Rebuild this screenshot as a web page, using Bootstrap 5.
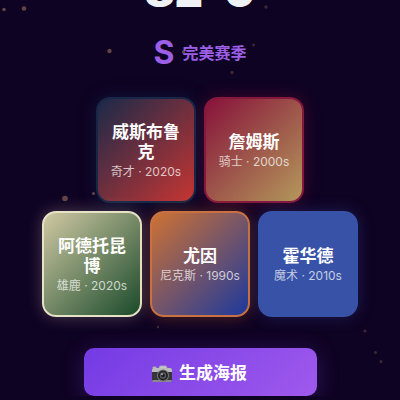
<!DOCTYPE html>
<html lang="zh-CN">
<head>
<meta charset="utf-8">
<meta name="viewport" content="width=device-width, initial-scale=1">
<title>82-0 完美赛季</title>
<link href="https://cdn.jsdelivr.net/npm/bootstrap@5.3.0/dist/css/bootstrap.min.css" rel="stylesheet">
<style>
body{background:#0f0323;color:#fff;font-family:Inter,"Noto Sans CJK SC",sans-serif;overflow:hidden}
.score{font-size:44px;line-height:48px;font-weight:900;color:#eef2f4;margin-top:-33px}
.verdict{color:#9c5fe6;margin-top:15px;height:46px}
.grade{font-size:32px;line-height:46px;font-weight:700}
.verdict-name{font-size:16px;line-height:24px;font-weight:700}
.roster{margin-top:21px}
.player{width:100px;height:106px;padding-top:2px;border:2px solid var(--edge);border-radius:14px;background:linear-gradient(135deg,var(--from),var(--to)) border-box;box-shadow:0 0 16px var(--glow)}
.player-name{font-size:17px;line-height:20px;font-weight:700}
.player-team{font-size:12px;line-height:18px;margin-top:1px;color:rgba(255,255,255,.72);white-space:nowrap}
.wizards{--from:#17294a;--to:#c93632;--edge:#182748;--glow:#0d244b88}
.cavs{--from:#860f39;--to:#b59b5c;--edge:#86183d;--glow:#860f3966}
.bucks{--from:#d3cba5;--to:#174829;--edge:#e6e2c7;--glow:#eee1c544}
.knicks{--from:#d27331;--to:#1a389f;--edge:#c87244;--glow:#e0702a55}
.magic{--from:#3852a7;--to:#3852a7;--edge:#3852a7;--glow:#3852a755}
.poster-btn,.poster-btn:hover{width:58.25%;height:48px;margin-top:31px;padding:10px 14px 6px 12px;gap:6px;border-radius:10px;border:0;color:#fff;font-size:17px;font-weight:700;background:linear-gradient(135deg,#743be4,#9f59ed);box-shadow:0 4px 22px #6d35d455}
.stars{z-index:2;pointer-events:none}
</style>
</head>
<body>
<svg class="stars position-absolute top-0 start-0 w-100 h-100" viewBox="0 0 400 400" aria-hidden="true" fill="#a87962">
<g opacity=".55"><circle cx="4" cy="9.500" r="1.800"/><circle cx="24" cy="8.500" r="2.300"/><circle cx="109.500" cy="51" r="2.200"/><circle cx="183.500" cy="52" r="1.800"/><circle cx="65" cy="198.500" r="2.800"/><circle cx="93.500" cy="193.500" r="1.500"/></g>
<g opacity=".3"><circle cx="266" cy="7" r="1.700"/><circle cx="253.500" cy="45" r="1.400"/><circle cx="232" cy="72.500" r="1.700"/><circle cx="158" cy="327" r="1.200"/><circle cx="365" cy="331" r="1.600"/><circle cx="375.500" cy="352.500" r="1.500"/><circle cx="381" cy="361.500" r="1.500"/></g>
</svg>
<main class="d-flex flex-column align-items-center text-center">
<h1 class="score mb-0">82-0</h1>
<div class="verdict d-flex align-items-center justify-content-center gap-2"><span class="grade">S</span><span class="verdict-name">完美赛季</span></div>
<section class="roster d-flex flex-column gap-2">
<div class="d-flex justify-content-center gap-2">
<article class="player wizards d-flex flex-column justify-content-center px-2"><div class="player-name">威斯布鲁克</div><div class="player-team">奇才 · 2020s</div></article>
<article class="player cavs d-flex flex-column justify-content-center px-2"><div class="player-name">詹姆斯</div><div class="player-team">骑士 · 2000s</div></article>
</div>
<div class="d-flex justify-content-center gap-2">
<article class="player bucks d-flex flex-column justify-content-center px-2"><div class="player-name">阿德托昆博</div><div class="player-team">雄鹿 · 2020s</div></article>
<article class="player knicks d-flex flex-column justify-content-center px-2"><div class="player-name">尤因</div><div class="player-team">尼克斯 · 1990s</div></article>
<article class="player magic d-flex flex-column justify-content-center px-2"><div class="player-name">霍华德</div><div class="player-team">魔术 · 2010s</div></article>
</div>
</section>
<button type="button" class="poster-btn btn d-flex align-items-center justify-content-center">
<svg width="22" height="18" viewBox="0 0 22 18" aria-hidden="true"><path d="M2 3V2h3v1M8 3l1-2h6l1 2" fill="#c8c8cb" stroke="#aaaab0"/><rect x="1" y="3" width="20" height="14" rx="1.500" fill="#37373a"/><path d="M1 4.500Q1 3 2.500 3h17Q21 3 21 4.500V7H1z" fill="#bcbcc0"/><rect x="1" y="15" width="20" height="2" rx="1" fill="#88888d"/><circle cx="12" cy="10.500" r="6" fill="#77777a"/><circle cx="12" cy="10.500" r="5" fill="#252528"/><circle cx="12" cy="10.500" r="3.200" fill="#55595e"/><circle cx="12" cy="10.500" r="1.800" fill="#171b22"/><circle cx="11" cy="9.300" r="1" fill="#a2a8ad"/></svg>
<span>生成海报</span></button>
</main>
<script src="https://cdn.jsdelivr.net/npm/bootstrap@5.3.0/dist/js/bootstrap.bundle.min.js"></script>
</body>
</html>
